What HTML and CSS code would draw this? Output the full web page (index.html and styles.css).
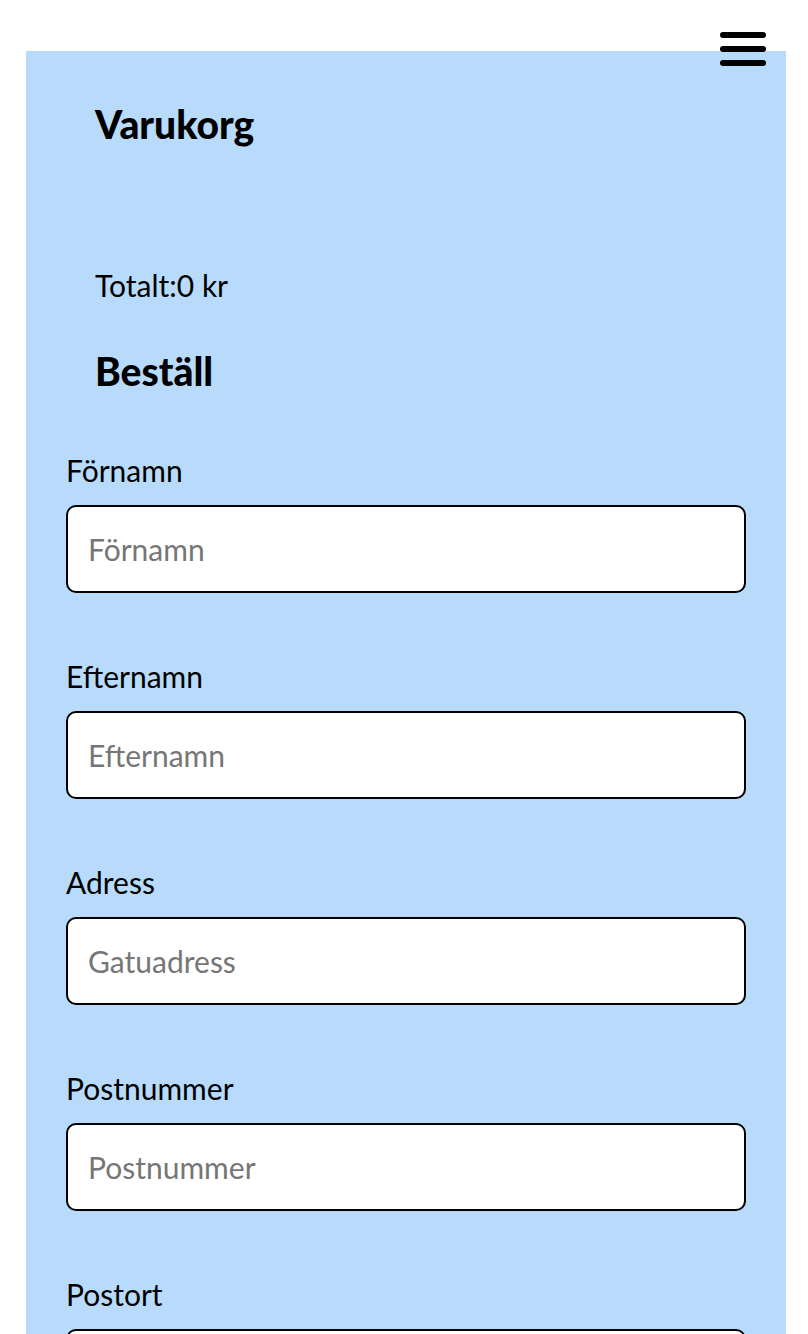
FILE: index.html
```html
<!DOCTYPE html>
<html lang="sv">
<head>
<meta charset="utf-8">
<title>Varukorg</title>
<link rel="stylesheet" href="styles.css">
</head>
<body>
<button class="menu" aria-label="Meny">
  <span class="bar"></span>
  <span class="bar"></span>
  <span class="bar"></span>
</button>
<main class="panel">
  <h2 class="title">Varukorg</h2>
  <p class="total">Totalt:0 kr</p>
  <h2 class="title order">Beställ</h2>
  <form class="form">
    <div class="field">
      <label for="fn">Förnamn</label>
      <input id="fn" type="text" placeholder="Förnamn">
    </div>
    <div class="field">
      <label for="en">Efternamn</label>
      <input id="en" type="text" placeholder="Efternamn">
    </div>
    <div class="field">
      <label for="ad">Adress</label>
      <input id="ad" type="text" placeholder="Gatuadress">
    </div>
    <div class="field">
      <label for="pn">Postnummer</label>
      <input id="pn" type="text" placeholder="Postnummer">
    </div>
    <div class="field">
      <label for="po">Postort</label>
      <input id="po" type="text" placeholder="Postort">
    </div>
  </form>
</main>
</body>
</html>
```
FILE: styles.css
```css
html, body {
  margin: 0;
  padding: 0;
  background: #ffffff;
}
body {
  font-family: Lato, "Open Sans", sans-serif;
  color: #000;
  font-size: 30px;
}
.menu {
  position: absolute;
  top: 32px;
  right: 42px;
  width: 46px;
  padding: 0;
  border: 0;
  background: transparent;
  display: flex;
  flex-direction: column;
  gap: 8px;
}
.bar {
  display: block;
  height: 6px;
  width: 46px;
  border-radius: 3px;
  background: #000;
}
.panel {
  margin: 51px 22px 0 26px;
  background: #b8dbfb;
  padding: 49px 40px 40px 40px;
  min-height: 1300px;
}
.title {
  margin: 0;
  padding-left: 29px;
  font-size: 39px;
  line-height: 48px;
  font-weight: 900;
}
.total {
  margin: 117px 0 0 0;
  padding-left: 29px;
  font-size: 30px;
  line-height: 40px;
}
.order {
  margin-top: 42px;
}
.form {
  margin-top: 55px;
  display: flex;
  flex-direction: column;
  gap: 63px;
}
.field {
  display: flex;
  flex-direction: column;
  gap: 15px;
}
.field label {
  font-size: 30px;
  line-height: 40px;
}
.field input {
  box-sizing: border-box;
  height: 88px;
  width: 100%;
  border: 2px solid #000;
  border-radius: 10px;
  background: #fff;
  padding: 0 20px;
  font-family: inherit;
  font-size: 30px;
  color: #000;
  outline: none;
}
.field input::placeholder {
  color: #767676;
}
```
